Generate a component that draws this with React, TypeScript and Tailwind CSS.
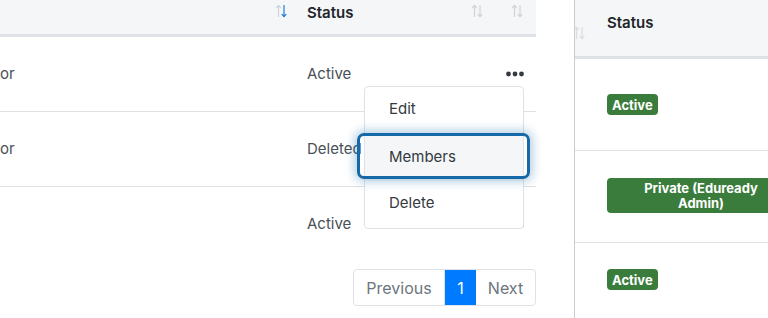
import React from 'react';

const FONT = { fontFamily: 'Inter, "Noto Sans", "Liberation Sans", sans-serif' };

function SortIcon({ active = false }: { active?: boolean }) {
  return (
    <svg width="14" height="14" viewBox="0 0 14 14" fill="none" strokeWidth="1.2" strokeLinecap="round" strokeLinejoin="round">
      <g stroke="#cfd3d7">
        <path d="M4.5 12.5V1.5" />
        <path d="M2.5 3.6L4.5 1.5l2 2.1" />
      </g>
      <g stroke={active ? '#1f7ed6' : '#cfd3d7'}>
        <path d="M10 1.5v11" />
        <path d="M8 10.4l2 2.1 2-2.1" />
      </g>
    </svg>
  );
}

function Dots() {
  return (
    <svg width="18" height="6" viewBox="0 0 18 6" fill="#343a40">
      <circle cx="2.5" cy="3" r="2.4" />
      <circle cx="9" cy="3" r="2.4" />
      <circle cx="15.5" cy="3" r="2.4" />
    </svg>
  );
}

const ROWS = [
  { lead: 'or', status: 'Active' },
  { lead: 'or', status: 'Deleted' },
  { lead: '', status: 'Active' },
];

function Badge({ children, wide = false }: { children: React.ReactNode; wide?: boolean }) {
  return (
    <span
      className={`inline-flex items-center justify-center rounded-[4px] bg-[#3a7c3c] text-center text-[13px] font-bold text-white ${wide ? 'h-[35px] w-[188px] shrink-0 leading-[15px]' : 'h-[21px] px-[5px] leading-[14px]'}`}
    >
      {children}
    </span>
  );
}

export default function App() {
  return (
    <div className="relative flex h-[318px] w-[768px] overflow-hidden bg-white text-[#495057]" style={FONT}>
      {/* left table */}
      <div className="relative w-[536px] shrink-0">
        <div className="flex h-[37px] border-b-[3px] border-[#dee2e6] bg-[#f5f6f8] pt-[4px]">
          <div className="flex w-[295px] justify-end pr-[7px]">
            <SortIcon active />
          </div>
          <div className="flex w-[200px] items-start justify-between pl-[12px] pr-[11px]">
            <span className="text-[15px] font-semibold leading-[18px] text-[#212529]">Status</span>
            <SortIcon />
          </div>
          <div className="flex w-[41px] justify-end pr-[12px]">
            <SortIcon />
          </div>
        </div>

        {ROWS.map((r, i) => (
          <div key={i} className={`flex h-[75px] items-center text-[15px] ${i < 2 ? 'border-b border-[#dee2e6]' : ''}`}>
            <div className="w-[295px]">{r.lead}</div>
            <div className="w-[200px] pl-[12px]">{r.status}</div>
            <div className="flex w-[41px] justify-start pl-[11px]">
              <Dots />
            </div>
          </div>
        ))}

        <div className="mt-[7px] flex justify-end">
          <div className="flex h-[37px] overflow-hidden rounded-[4px] border border-[#dee2e6] text-[16px]">
            <div className="flex w-[91px] items-center justify-center border-r border-[#dee2e6] text-[#6c757d]">Previous</div>
            <div className="flex w-[31px] items-center justify-center bg-[#007bff] text-white">1</div>
            <div className="flex w-[59px] items-center justify-center text-[#6c757d]">Next</div>
          </div>
        </div>

        {/* dropdown menu */}
        <div className="absolute left-[364px] top-[86px] flex h-[143px] w-[160px] flex-col rounded-[4px] border border-[#dee2e6] bg-white py-[2px] text-[15px] text-[#343a40]">
          <div className="flex h-[44px] items-center pb-[3px] pl-[24px]">Edit</div>
          <div className="flex h-[48px] items-center bg-[#f5f6f8] pl-[24px]">Members</div>
          <div className="flex h-[44px] items-center pl-[24px]">Delete</div>
        </div>
        <div className="absolute left-[357px] top-[133px] h-[46px] w-[173px] rounded-[7px] border-[3px] border-[#1569a6] shadow-[0_0_10px_3px_rgba(21,105,166,0.3)]" />
      </div>

      {/* right table */}
      <div className="ml-[38px] flex-1 border-l border-[#c8cbcf]">
        <div className="relative flex h-[59px] border-b-[3px] border-[#dee2e6] bg-[#f5f6f8] pl-[32px] pt-[14px]">
          <span className="text-[15px] font-semibold leading-[18px] text-[#212529]">Status</span>
          <div className="absolute -left-[3px] top-[26px] opacity-70">
            <SortIcon />
          </div>
        </div>
        <div className="flex h-[92px] border-b border-[#dee2e6] pl-[32px] pt-[35px]">
          <Badge>Active</Badge>
        </div>
        <div className="flex h-[92px] border-b border-[#dee2e6] pl-[32px] pt-[27px]">
          <Badge wide>
            Private (Eduready
            <br />
            Admin)
          </Badge>
        </div>
        <div className="flex pl-[32px] pt-[26px]">
          <Badge>Active</Badge>
        </div>
      </div>
    </div>
  );
}
